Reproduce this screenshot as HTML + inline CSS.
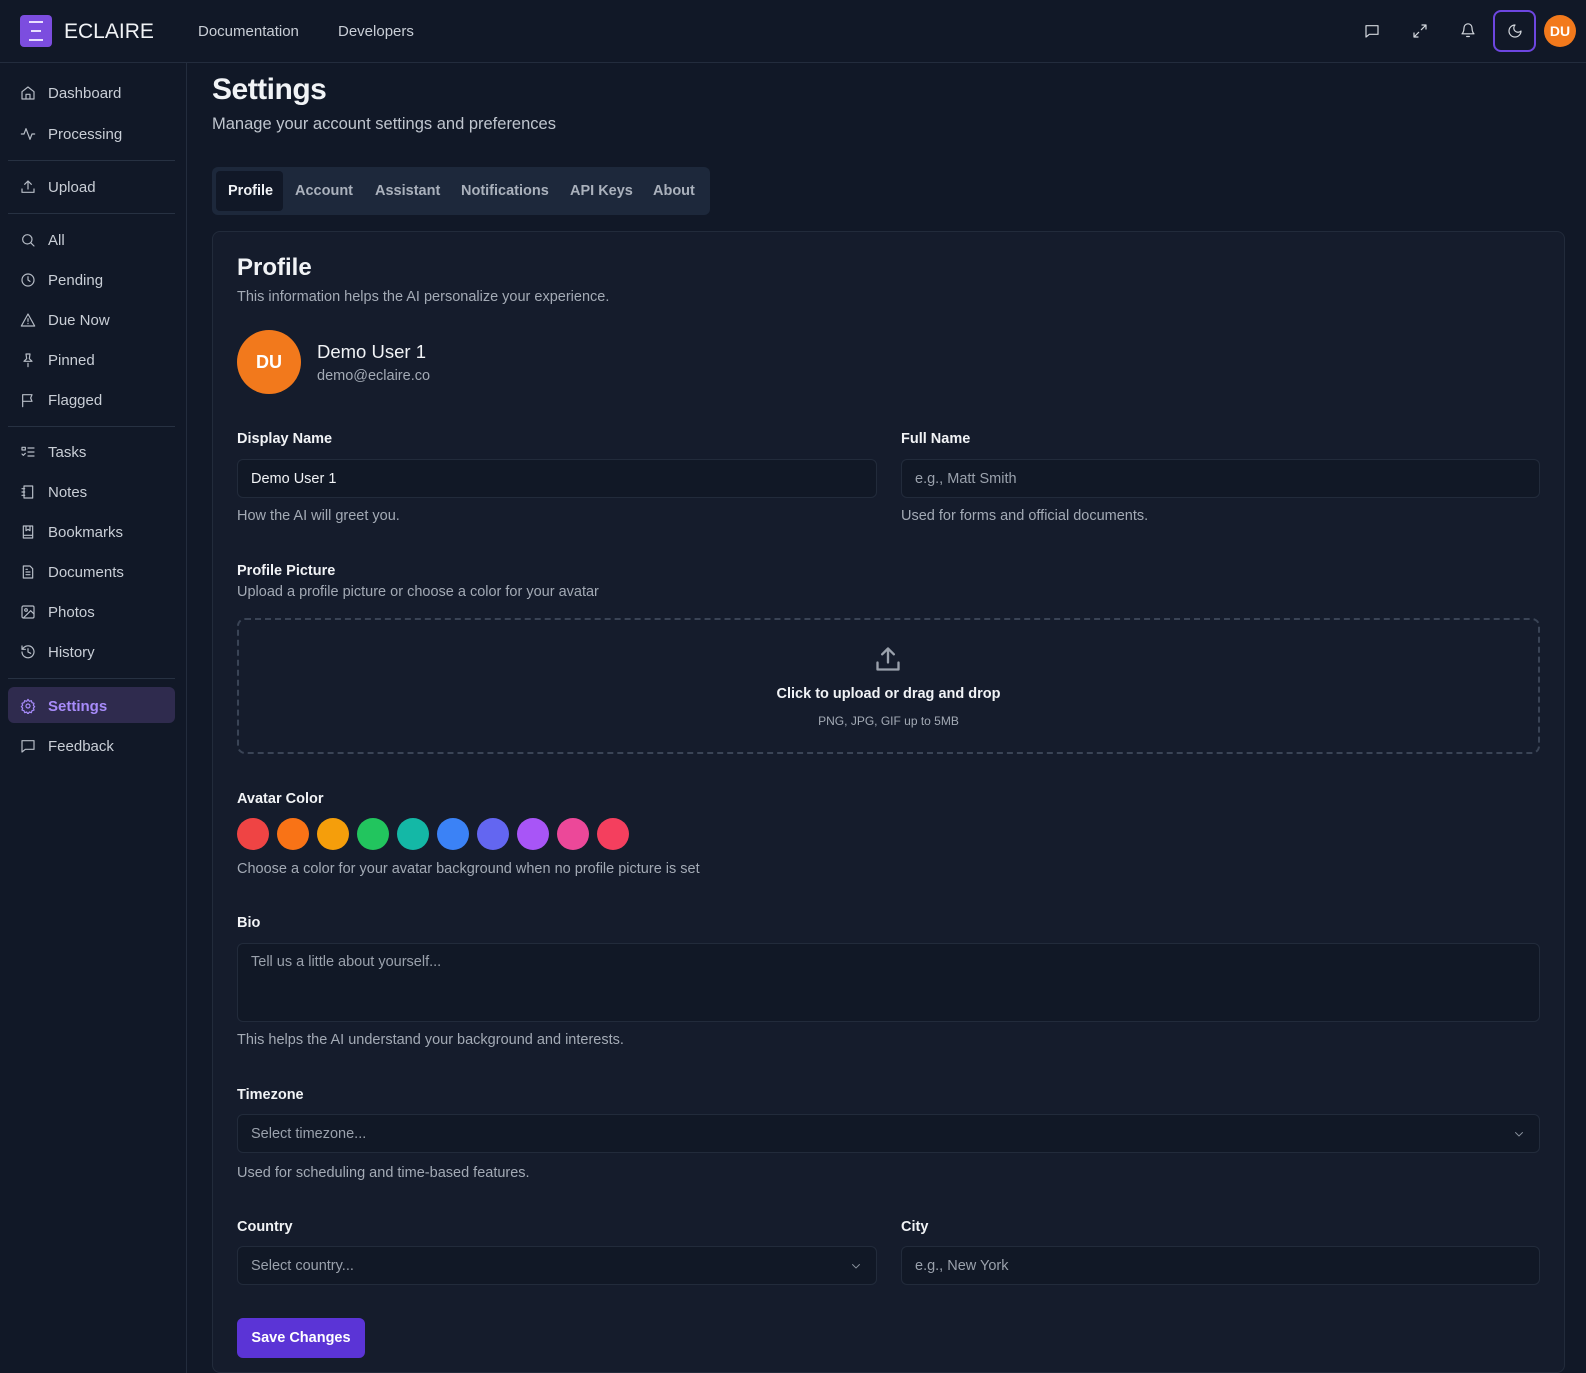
<!DOCTYPE html>
<html><head><meta charset="utf-8"><style>
*{box-sizing:border-box;margin:0;padding:0}
body{width:1586px;height:1373px;overflow:hidden;background:#111827;font-family:"Liberation Sans",sans-serif;color:#e5e7eb;position:relative}
.a{position:absolute}
.hdr{left:0;top:0;width:1586px;height:63px;border-bottom:1px solid #232c3d}
.side{left:0;top:63px;width:187px;height:1310px;border-right:1px solid #232c3d}
.ni{position:absolute;left:8px;width:167px;height:36px;display:flex;align-items:center;padding-left:12px;font-size:15px;color:#c9ced6;padding-top:2px}
.ni svg{width:16px;height:16px;margin-right:12px;stroke:#b6bcc6;fill:none;stroke-width:1.8;stroke-linecap:round;stroke-linejoin:round}
.div{position:absolute;left:8px;width:167px;height:1px;background:#273142}
.lbl{position:absolute;font-size:14.5px;font-weight:bold;color:#f1f3f6}
.help{position:absolute;font-size:14.5px;color:#a3aab5}
.inp{position:absolute;height:39px;background:#111826;border:1px solid #222b3b;border-radius:6px;font-size:14.5px;padding-left:13px;display:flex;align-items:center;color:#9aa1ac}
.dot{position:absolute;top:818px;width:32px;height:32px;border-radius:50%}
.ic{position:absolute;stroke:#d4d8de;fill:none;stroke-width:1.8;stroke-linecap:round;stroke-linejoin:round}
</style></head><body>
<div class="a hdr"></div>
<div class="a" style="left:20px;top:15px;width:32px;height:32px;background:#7c4ddf;border-radius:4px"></div>
<div class="a" style="left:29px;top:21px;width:14px;height:2px;background:#e9dfff"></div>
<div class="a" style="left:31px;top:30px;width:10px;height:2px;background:#e9dfff"></div>
<div class="a" style="left:29px;top:39px;width:14px;height:2px;background:#e9dfff"></div>
<div class="a" style="left:64px;top:20px;font-size:21px;color:#f1f3f6">ECLAIRE</div>
<div class="a" style="left:198px;top:23px;font-size:15px;color:#c9ced6">Documentation</div>
<div class="a" style="left:338px;top:23px;font-size:15px;color:#c9ced6">Developers</div>
<svg class="ic" style="left:1364px;top:23px" width="16" height="16" viewBox="0 0 24 24"><path d="M3 4h18v13H8l-5 4z"/></svg>
<svg class="ic" style="left:1412px;top:23px" width="16" height="16" viewBox="0 0 24 24"><path d="M14 10l7-7M15 3h6v6M10 14l-7 7M3 15v6h6"/></svg>
<svg class="ic" style="left:1460px;top:22px" width="16" height="17" viewBox="0 0 24 24"><path d="M6 8a6 6 0 0 1 12 0c0 7 3 9 3 9H3s3-2 3-9M10 21h4"/></svg>
<div class="a" style="left:1493px;top:10px;width:43px;height:42px;border:2px solid #6d46e0;border-radius:8px"></div>
<svg class="ic" style="left:1507px;top:23px" width="16" height="16" viewBox="0 0 24 24"><path d="M12 3a6 6 0 0 0 9 9 9 9 0 1 1-9-9z"/></svg>
<div class="a" style="left:1544px;top:15px;width:32px;height:32px;border-radius:50%;background:#f2791c;color:#fff;font-weight:bold;font-size:14px;display:flex;align-items:center;justify-content:center">DU</div>

<div class="a side"></div>
<div class="ni" style="top:74px"><svg viewBox="0 0 24 24"><path d="M3 10l9-7 9 7v11H3zM9 21v-7h6v7"/></svg>Dashboard</div>
<div class="ni" style="top:115px"><svg viewBox="0 0 24 24"><path d="M2 12h4l3-8 6 16 3-8h4"/></svg>Processing</div>
<div class="div" style="top:160px"></div>
<div class="ni" style="top:168px"><svg viewBox="0 0 24 24"><path d="M12 15V3M7 8l5-5 5 5M3 15v5h18v-5"/></svg>Upload</div>
<div class="div" style="top:213px"></div>
<div class="ni" style="top:221px"><svg viewBox="0 0 24 24"><circle cx="11" cy="11" r="7"/><path d="M21 21l-5-5"/></svg>All</div>
<div class="ni" style="top:261px"><svg viewBox="0 0 24 24"><circle cx="12" cy="12" r="9"/><path d="M12 7v5l3 2"/></svg>Pending</div>
<div class="ni" style="top:301px"><svg viewBox="0 0 24 24"><path d="M12 3l10 18H2zM12 10v4M12 17v.5"/></svg>Due Now</div>
<div class="ni" style="top:341px"><svg viewBox="0 0 24 24"><path d="M12 17v5M9 3h6l-1 7 4 4H6l4-4z"/></svg>Pinned</div>
<div class="ni" style="top:381px"><svg viewBox="0 0 24 24"><path d="M4 22V4h14l-2 5 2 5H4"/></svg>Flagged</div>
<div class="div" style="top:426px"></div>
<div class="ni" style="top:433px"><svg viewBox="0 0 24 24"><path d="M3 5h5v4H3zM3 15l2 2 3-3M12 6h9M12 12h9M12 18h9"/></svg>Tasks</div>
<div class="ni" style="top:473px"><svg viewBox="0 0 24 24"><path d="M6 3h13v18H6zM3 7h4M3 12h4M3 17h4"/></svg>Notes</div>
<div class="ni" style="top:513px"><svg viewBox="0 0 24 24"><path d="M5 3h14v18H5zM5 17h14M9 3v7l3-2 3 2V3"/></svg>Bookmarks</div>
<div class="ni" style="top:553px"><svg viewBox="0 0 24 24"><path d="M5 3h10l4 4v14H5zM9 12h6M9 16h6M9 8h2"/></svg>Documents</div>
<div class="ni" style="top:593px"><svg viewBox="0 0 24 24"><rect x="3" y="3" width="18" height="18" rx="2"/><circle cx="9" cy="9" r="2"/><path d="M21 15l-5-5-11 11"/></svg>Photos</div>
<div class="ni" style="top:633px"><svg viewBox="0 0 24 24"><path d="M3 12a9 9 0 1 0 3-7L3 8M3 3v5h5M12 7v5l4 2"/></svg>History</div>
<div class="div" style="top:678px"></div>
<div class="ni" style="top:687px;background:#2f2b4e;border-radius:6px;color:#a78bfa;font-weight:bold"><svg viewBox="0 0 24 24" style="stroke:#a78bfa"><circle cx="12" cy="12" r="3"/><path d="M12 2l2 3 3-1 1 3 3 1-1 3 2 2-2 2 1 3-3 1-1 3-3-1-2 3-2-3-3 1-1-3-3-1 1-3-2-2 2-2-1-3 3-1 1-3 3 1z"/></svg>Settings</div>
<div class="ni" style="top:727px"><svg viewBox="0 0 24 24"><path d="M3 4h18v13H8l-5 4z"/></svg>Feedback</div>

<div class="a" style="left:212px;top:73px;font-size:30px;font-weight:bold;color:#f1f3f6;letter-spacing:-0.5px">Settings</div>
<div class="a" style="left:212px;top:115px;font-size:16.5px;color:#bfc5ce">Manage your account settings and preferences</div>
<div class="a" style="left:212px;top:167px;width:498px;height:48px;background:#1d283b;border-radius:6px"></div>
<div class="a" style="left:216px;top:171px;width:67px;height:40px;background:#111827;border-radius:4px"></div>
<div class="a" style="left:228px;top:183px;font-size:14.5px;font-weight:bold;color:#f1f3f6">Profile</div>
<div class="a" style="left:295px;top:183px;font-size:14.5px;font-weight:bold;color:#aab1bc">Account</div>
<div class="a" style="left:375px;top:183px;font-size:14.5px;font-weight:bold;color:#aab1bc">Assistant</div>
<div class="a" style="left:461px;top:183px;font-size:14.5px;font-weight:bold;color:#aab1bc">Notifications</div>
<div class="a" style="left:570px;top:183px;font-size:14.5px;font-weight:bold;color:#aab1bc">API Keys</div>
<div class="a" style="left:653px;top:183px;font-size:14.5px;font-weight:bold;color:#aab1bc">About</div>

<div class="a" style="left:212px;top:231px;width:1353px;height:1142px;background:#151c2c;border:1px solid #222b3b;border-radius:8px"></div>
<div class="a" style="left:237px;top:254px;font-size:24px;font-weight:bold;color:#f1f3f6">Profile</div>
<div class="a" style="left:237px;top:289px;font-size:14.5px;color:#a3aab5">This information helps the AI personalize your experience.</div>
<div class="a" style="left:237px;top:330px;width:64px;height:64px;border-radius:50%;background:#f2791c;color:#fff;font-weight:bold;font-size:18px;display:flex;align-items:center;justify-content:center">DU</div>
<div class="a" style="left:317px;top:341px;font-size:18.5px;color:#f1f3f6">Demo User 1</div>
<div class="a" style="left:317px;top:368px;font-size:14.5px;color:#a3aab5">demo@eclaire.co</div>

<div class="lbl" style="left:237px;top:431px">Display Name</div>
<div class="inp" style="left:237px;top:459px;width:640px;color:#f1f3f6">Demo User 1</div>
<div class="help" style="left:237px;top:508px">How the AI will greet you.</div>
<div class="lbl" style="left:901px;top:431px">Full Name</div>
<div class="inp" style="left:901px;top:459px;width:639px">e.g., Matt Smith</div>
<div class="help" style="left:901px;top:508px">Used for forms and official documents.</div>

<div class="lbl" style="left:237px;top:563px">Profile Picture</div>
<div class="help" style="left:237px;top:584px">Upload a profile picture or choose a color for your avatar</div>
<div class="a" style="left:237px;top:618px;width:1303px;height:136px;border:2px dashed #3a4456;border-radius:8px"></div>
<svg class="ic" style="left:874px;top:645px;stroke:#9aa1ac;stroke-width:2" width="28" height="28" viewBox="0 0 24 24"><path d="M12 15V3M7 8l5-5 5 5M3 15v6h18v-6"/></svg>
<div class="a" style="left:237px;top:686px;width:1303px;text-align:center;font-size:14.5px;font-weight:bold;color:#f1f3f6">Click to upload or drag and drop</div>
<div class="a" style="left:237px;top:714px;width:1303px;text-align:center;font-size:12px;color:#a3aab5">PNG, JPG, GIF up to 5MB</div>

<div class="lbl" style="left:237px;top:791px">Avatar Color</div>
<div class="dot" style="left:237px;background:#ef4444"></div>
<div class="dot" style="left:277px;background:#f97316"></div>
<div class="dot" style="left:317px;background:#f59e0b"></div>
<div class="dot" style="left:357px;background:#22c55e"></div>
<div class="dot" style="left:397px;background:#14b8a6"></div>
<div class="dot" style="left:437px;background:#3b82f6"></div>
<div class="dot" style="left:477px;background:#6366f1"></div>
<div class="dot" style="left:517px;background:#a855f7"></div>
<div class="dot" style="left:557px;background:#ec4899"></div>
<div class="dot" style="left:597px;background:#f43f5e"></div>
<div class="help" style="left:237px;top:861px">Choose a color for your avatar background when no profile picture is set</div>

<div class="lbl" style="left:237px;top:915px">Bio</div>
<div class="inp" style="left:237px;top:943px;width:1303px;height:79px;align-items:flex-start;padding-top:10px">Tell us a little about yourself...</div>
<div class="help" style="left:237px;top:1032px">This helps the AI understand your background and interests.</div>

<div class="lbl" style="left:237px;top:1087px">Timezone</div>
<div class="inp" style="left:237px;top:1114px;width:1303px">Select timezone...</div>
<svg class="ic" style="left:1513px;top:1128px;stroke:#8a919c" width="12" height="12" viewBox="0 0 24 24"><path d="M5 9l7 7 7-7"/></svg>
<div class="help" style="left:237px;top:1165px">Used for scheduling and time-based features.</div>

<div class="lbl" style="left:237px;top:1219px">Country</div>
<div class="inp" style="left:237px;top:1246px;width:640px">Select country...</div>
<svg class="ic" style="left:850px;top:1260px;stroke:#8a919c" width="12" height="12" viewBox="0 0 24 24"><path d="M5 9l7 7 7-7"/></svg>
<div class="lbl" style="left:901px;top:1219px">City</div>
<div class="inp" style="left:901px;top:1246px;width:639px">e.g., New York</div>

<div class="a" style="left:237px;top:1318px;width:128px;height:40px;background:#5b34d6;border-radius:6px;color:#fff;font-weight:bold;font-size:14.5px;display:flex;align-items:center;justify-content:center">Save Changes</div>
</body></html>
